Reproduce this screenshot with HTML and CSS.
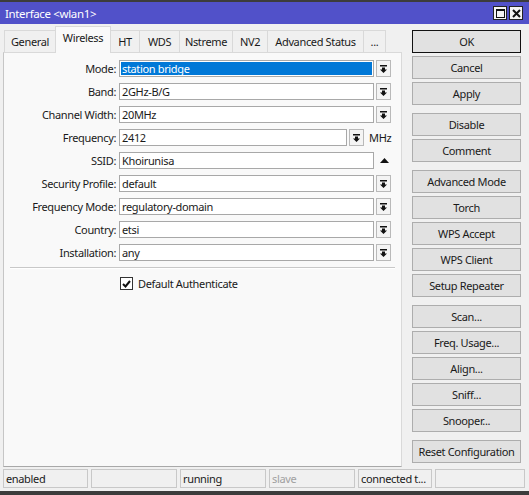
FILE: index.html
```html
<!DOCTYPE html>
<html>
<head>
<meta charset="utf-8">
<link rel="stylesheet" href="styles.css">
</head>
<body>
<div class="window">
  <div class="titlebar">
    <span class="title">Interface &lt;wlan1&gt;</span>
    <div class="tb-icons">
      <span class="tb-btn"><svg width="9" height="9" viewBox="0 0 9 9"><rect x="0.5" y="0.5" width="8" height="8" fill="none" stroke="#111" stroke-width="1"/><rect x="0" y="0" width="9" height="2" fill="#111"/></svg></span>
      <span class="tb-btn"><svg width="9" height="9" viewBox="0 0 9 9"><path d="M1 1 L8 8 M8 1 L1 8" stroke="#111" stroke-width="2"/></svg></span>
    </div>
  </div>
  <div class="body">
    <div class="left">
      <div class="tabs">
        <span class="tab w-general">General</span>
        <span class="tab active w-wireless">Wireless</span>
        <span class="tab w-ht">HT</span>
        <span class="tab w-wds">WDS</span>
        <span class="tab w-nstreme">Nstreme</span>
        <span class="tab w-nv2">NV2</span>
        <span class="tab w-adv">Advanced Status</span>
        <span class="tab w-more">...</span>
      </div>
      <div class="panel">
        <div class="form">
          <label class="lbl">Mode:</label>
          <div class="field"><span class="input sel"><span class="hl">station bridge</span></span><span class="dd"><svg width="7" height="8" viewBox="0 0 7 8"><rect x="0" y="0" width="7" height="1.5" fill="#111"/><path d="M2 2.5 H5 V4.5 H7 L3.5 8 L0 4.5 H2 Z" fill="#111"/></svg></span></div>

          <label class="lbl">Band:</label>
          <div class="field"><span class="input">2GHz-B/G</span><span class="dd"><svg width="7" height="8" viewBox="0 0 7 8"><rect x="0" y="0" width="7" height="1.5" fill="#111"/><path d="M2 2.5 H5 V4.5 H7 L3.5 8 L0 4.5 H2 Z" fill="#111"/></svg></span></div>

          <label class="lbl">Channel Width:</label>
          <div class="field"><span class="input">20MHz</span><span class="dd"><svg width="7" height="8" viewBox="0 0 7 8"><rect x="0" y="0" width="7" height="1.5" fill="#111"/><path d="M2 2.5 H5 V4.5 H7 L3.5 8 L0 4.5 H2 Z" fill="#111"/></svg></span></div>

          <label class="lbl">Frequency:</label>
          <div class="field"><span class="input short">2412</span><span class="dd"><svg width="7" height="8" viewBox="0 0 7 8"><rect x="0" y="0" width="7" height="1.5" fill="#111"/><path d="M2 2.5 H5 V4.5 H7 L3.5 8 L0 4.5 H2 Z" fill="#111"/></svg></span><span class="unit">MHz</span></div>

          <label class="lbl">SSID:</label>
          <div class="field"><span class="input">Khoirunisa</span><span class="up"><svg width="9" height="5" viewBox="0 0 9 5"><path d="M0 5 L4.5 0 L9 5 Z" fill="#111"/></svg></span></div>

          <label class="lbl">Security Profile:</label>
          <div class="field"><span class="input">default</span><span class="dd"><svg width="7" height="8" viewBox="0 0 7 8"><rect x="0" y="0" width="7" height="1.5" fill="#111"/><path d="M2 2.5 H5 V4.5 H7 L3.5 8 L0 4.5 H2 Z" fill="#111"/></svg></span></div>

          <label class="lbl">Frequency Mode:</label>
          <div class="field"><span class="input">regulatory-domain</span><span class="dd"><svg width="7" height="8" viewBox="0 0 7 8"><rect x="0" y="0" width="7" height="1.5" fill="#111"/><path d="M2 2.5 H5 V4.5 H7 L3.5 8 L0 4.5 H2 Z" fill="#111"/></svg></span></div>

          <label class="lbl">Country:</label>
          <div class="field"><span class="input">etsi</span><span class="dd"><svg width="7" height="8" viewBox="0 0 7 8"><rect x="0" y="0" width="7" height="1.5" fill="#111"/><path d="M2 2.5 H5 V4.5 H7 L3.5 8 L0 4.5 H2 Z" fill="#111"/></svg></span></div>

          <label class="lbl">Installation:</label>
          <div class="field"><span class="input">any</span><span class="dd"><svg width="7" height="8" viewBox="0 0 7 8"><rect x="0" y="0" width="7" height="1.5" fill="#111"/><path d="M2 2.5 H5 V4.5 H7 L3.5 8 L0 4.5 H2 Z" fill="#111"/></svg></span></div>
        </div>
        <div class="sep"></div>
        <div class="check-row">
          <span class="checkbox"><svg width="9" height="8" viewBox="0 0 9 8"><path d="M1 4 L3.5 6.5 L8 1" fill="none" stroke="#111" stroke-width="2"/></svg></span>
          <span>Default Authenticate</span>
        </div>
      </div>
    </div>
    <div class="buttons">
      <div class="group">
        <button class="btn default">OK</button>
        <button class="btn">Cancel</button>
        <button class="btn">Apply</button>
      </div>
      <div class="group">
        <button class="btn">Disable</button>
        <button class="btn">Comment</button>
      </div>
      <div class="group">
        <button class="btn">Advanced Mode</button>
        <button class="btn">Torch</button>
        <button class="btn">WPS Accept</button>
        <button class="btn">WPS Client</button>
        <button class="btn">Setup Repeater</button>
      </div>
      <div class="group">
        <button class="btn">Scan...</button>
        <button class="btn">Freq. Usage...</button>
        <button class="btn">Align...</button>
        <button class="btn">Sniff...</button>
        <button class="btn">Snooper...</button>
      </div>
      <div class="group">
        <button class="btn">Reset Configuration</button>
      </div>
    </div>
  </div>
  <div class="status">
    <span class="cell c1">enabled</span>
    <span class="cell c2"></span>
    <span class="cell c3">running</span>
    <span class="cell c4 dim">slave</span>
    <span class="cell c5">connected t...</span>
    <span class="cell c6"></span>
  </div>
</div>
</body>
</html>
```

FILE: styles.css
```css
html, body {
  margin: 0;
  padding: 0;
  background: #f0f0f0;
}
body {
  font-family: "Noto Sans", "Open Sans", sans-serif;
  font-size: 11px;
  letter-spacing: -0.35px;
  color: #1a1a1a;
}
.window {
  width: 529px;
  height: 495px;
  display: flex;
  flex-direction: column;
  background: #f0f0f0;
  box-sizing: border-box;
  border-top: 2px solid #3c3c3c;
  border-bottom: 4px solid #3c3c3c;
  overflow: hidden;
}
.titlebar {
  height: 22px;
  background: #5151c9;
  display: flex;
  align-items: center;
  justify-content: space-between;
  padding: 0 6px 0 5px;
  flex: none;
}
.title {
  color: #fff;
  font-size: 11.5px;
}
.tb-icons {
  display: flex;
  gap: 2px;
  letter-spacing: 0;
}
.tb-btn {
  width: 12px;
  height: 12px;
  background: #f4f4f4;
  border: 1px solid #222;
  display: flex;
  align-items: center;
  justify-content: center;
}
.body {
  display: flex;
  flex: 1;
  min-height: 0;
}
.left {
  width: 399px;
  margin-left: 3px;
  display: flex;
  flex-direction: column;
}
.tabs {
  height: 28px;
  display: flex;
  align-items: flex-end;
  padding-left: 1px;
  flex: none;
}
.tab {
  height: 21px;
  line-height: 22px;
  border: 1px solid #d9d9d9;
  border-bottom: none;
  margin-right: -1px;
  background: #f0f0f0;
  box-sizing: content-box;
  text-align: center;
}
.tab.active {
  height: 26px;
  line-height: 21px;
  background: #f9f9f9;
  position: relative;
  z-index: 1;
  margin-bottom: -1px;
}
.w-general { width: 50px; }
.w-wireless { width: 54px; }
.w-ht { width: 28px; }
.w-wds { width: 39px; }
.w-nstreme { width: 52px; }
.w-nv2 { width: 34px; }
.w-adv { width: 95px; }
.w-more { width: 21px; }
.panel {
  height: 415px;
  box-sizing: border-box;
  border: 1px solid #d9d9d9;
  border-left-color: #c6c6c6;
  border-bottom-color: #a9a9a9;
  background: #f9f9f9;
  padding-top: 7px;
}
.form {
  display: grid;
  grid-template-columns: 112px 1fr;
  column-gap: 3px;
  row-gap: 6px;
  grid-auto-rows: 17px;
}
.lbl {
  text-align: right;
  line-height: 17px;
  white-space: nowrap;
}
.field {
  display: flex;
  align-items: center;
  height: 17px;
}
.input {
  width: 255px;
  height: 17px;
  box-sizing: border-box;
  border: 1px solid #a8a8a8;
  background: #fff;
  line-height: 15px;
  padding-left: 2px;
  white-space: nowrap;
}
.input.short {
  width: 228px;
}
.input.sel {
  padding: 1px;
}
.hl {
  display: block;
  height: 13px;
  line-height: 13px;
  background: #0078d7;
  color: #fff;
  padding-left: 1px;
}
.dd {
  width: 15px;
  height: 17px;
  box-sizing: border-box;
  margin-left: 2px;
  border: 1px solid #b9b9b9;
  background: #f4f4f4;
  display: flex;
  align-items: center;
  justify-content: center;
}
.up {
  width: 17px;
  margin-left: 2px;
  display: flex;
  justify-content: center;
  align-items: center;
}
.unit {
  margin-left: 5px;
}
.sep {
  margin: 6px 6px 0 6px;
  border-top: 1px solid #c8c8c8;
  border-bottom: 1px solid #fff;
}
.check-row {
  display: flex;
  align-items: center;
  gap: 5px;
  margin-top: 8px;
  padding-left: 116px;
  height: 13px;
}
.checkbox {
  width: 11px;
  height: 11px;
  border: 1px solid #333;
  background: #fff;
  display: flex;
  align-items: center;
  justify-content: center;
}
.buttons {
  margin-left: 10px;
  padding-top: 6px;
  width: 109px;
  display: flex;
  flex-direction: column;
  gap: 8px;
}
.group {
  display: flex;
  flex-direction: column;
  gap: 3px;
}
.btn {
  height: 23px;
  width: 109px;
  box-sizing: border-box;
  border: 1px solid #adadad;
  background: #e1e1e1;
  font-family: inherit;
  font-size: 11px;
  letter-spacing: -0.35px;
  color: #1a1a1a;
  padding: 0;
  margin: 0;
}
.btn.default {
  border: 1px solid #111;
  box-shadow: inset 0 0 0 1px #e1e1e1;
}
.status {
  height: 20px;
  display: flex;
  gap: 3px;
  padding: 1px 0 0 3px;
  flex: none;
  margin-bottom: 2px;
}
.cell {
  height: 19px;
  box-sizing: border-box;
  border: 1px solid #c8c8c8;
  line-height: 17px;
  padding-left: 2px;
  white-space: nowrap;
  overflow: hidden;
}
.c1 { width: 85px; }
.c2 { width: 86px; }
.c3 { width: 86px; }
.c4 { width: 86px; }
.c5 { width: 74px; }
.c6 { width: 90px; }
.dim { color: #a0a0a0; }
```
